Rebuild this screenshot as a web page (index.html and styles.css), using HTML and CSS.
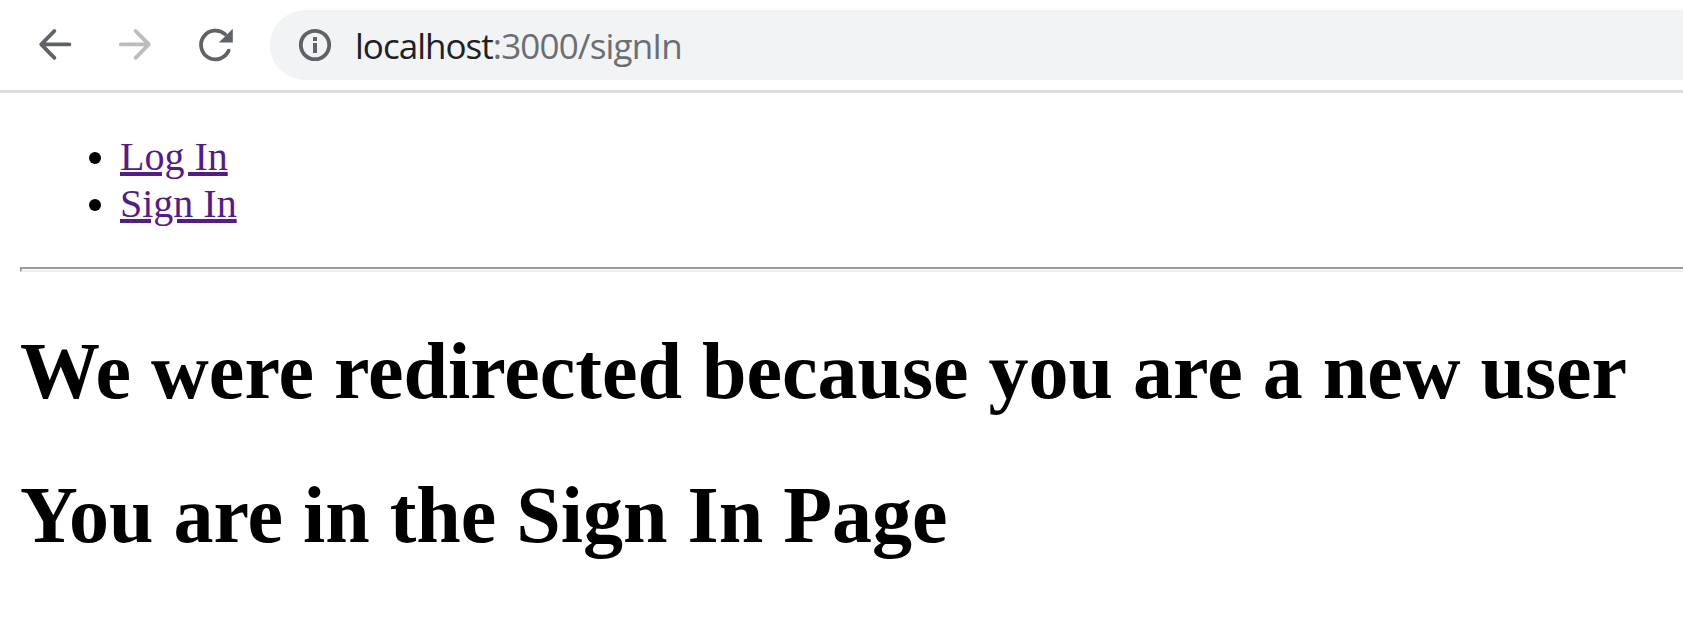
FILE: index.html
```html
<!DOCTYPE html>
<html lang="en">
<head>
<meta charset="utf-8">
<title>Sign In</title>
<link rel="stylesheet" href="styles.css">
</head>
<body>
<header class="toolbar">
  <nav class="controls">
    <svg class="icon" viewBox="0 0 40 40"><path class="line" d="M35.4 19.4H8M20.4 6L7.2 19.4L20.4 32.8"/></svg>
    <svg class="icon disabled" viewBox="0 0 40 40"><path class="line" d="M6.8 19.4H34M21.6 6L34.8 19.4L21.6 32.8"/></svg>
    <svg class="icon" viewBox="0 0 40 40"><path class="line" d="M34.7 25.6A14.4 14.4 0 1 1 31 9.2"/><path class="fill" d="M38.8 3.8V17.6H24.8Z"/></svg>
  </nav>
  <div class="address">
    <svg class="info" viewBox="0 0 34 34"><circle cx="17" cy="17" r="14.2"/><path d="M15 9h4v4h-4zM15 15h4v10h-4z"/></svg>
    <div class="url"><span class="host">localhost</span><span class="path">:3000/signIn</span></div>
  </div>
</header>
<main class="page">
  <ul class="links">
    <li><a class="link" href="#">Log In</a></li>
    <li><a class="link" href="#">Sign In</a></li>
  </ul>
  <hr class="rule">
  <h1 class="heading">We were redirected because you are a new user</h1>
  <h1 class="heading">You are in the Sign In Page</h1>
</main>
</body>
</html>
```
FILE: styles.css
```css
body {
  margin: 0;
  background: #fff;
  color: #000;
  font-family: "Liberation Serif", "Times New Roman", serif;
  font-size: 40px;
  overflow: hidden;
}

.toolbar {
  display: flex;
  box-sizing: border-box;
  height: 93px;
  padding: 10px 0 10px 34px;
  gap: 36px;
  border-bottom: 3px solid #dadce0;
}

.controls {
  display: flex;
  align-items: center;
  gap: 40px;
  height: 70px;
}

.icon {
  width: 40px;
  height: 40px;
  flex: none;
  color: #5f6368;
}

.icon.disabled {
  color: #babcbe;
}

.line {
  fill: none;
  stroke: currentColor;
  stroke-width: 3.8;
  stroke-linecap: round;
  stroke-linejoin: round;
}

.fill {
  fill: currentColor;
}

.address {
  flex: 1;
  display: flex;
  align-items: center;
  gap: 23px;
  height: 70px;
  padding-left: 28px;
  border-radius: 35px 0 0 35px;
  background: #f1f3f4;
}

.info {
  width: 34px;
  height: 34px;
  flex: none;
  fill: #5f6368;
}

.info circle {
  fill: none;
  stroke: #5f6368;
  stroke-width: 3.8;
}

.url {
  padding-top: 1px;
  font: 35px/48px "Open Sans", "Noto Sans", sans-serif;
  white-space: nowrap;
  color: #202124;
}

.host {
  letter-spacing: -0.98px;
}

.path {
  color: #6b6e72;
  letter-spacing: -0.85px;
}

.page {
  display: flow-root;
  margin-left: 20px;
}

.links {
  margin: 40px 0;
  padding-left: 100px;
  line-height: 47px;
}

.link {
  color: #551a8b;
  text-decoration: underline;
  text-decoration-thickness: 4px;
}

.rule {
  height: 1px;
  margin: 0 -4px 0 0;
  border: 2px solid;
  border-color: #9a9a9a #eee #eee #9a9a9a;
}

.heading {
  margin: 53.6px 0;
  font-size: 80px;
  line-height: 91px;
  white-space: nowrap;
}
```
